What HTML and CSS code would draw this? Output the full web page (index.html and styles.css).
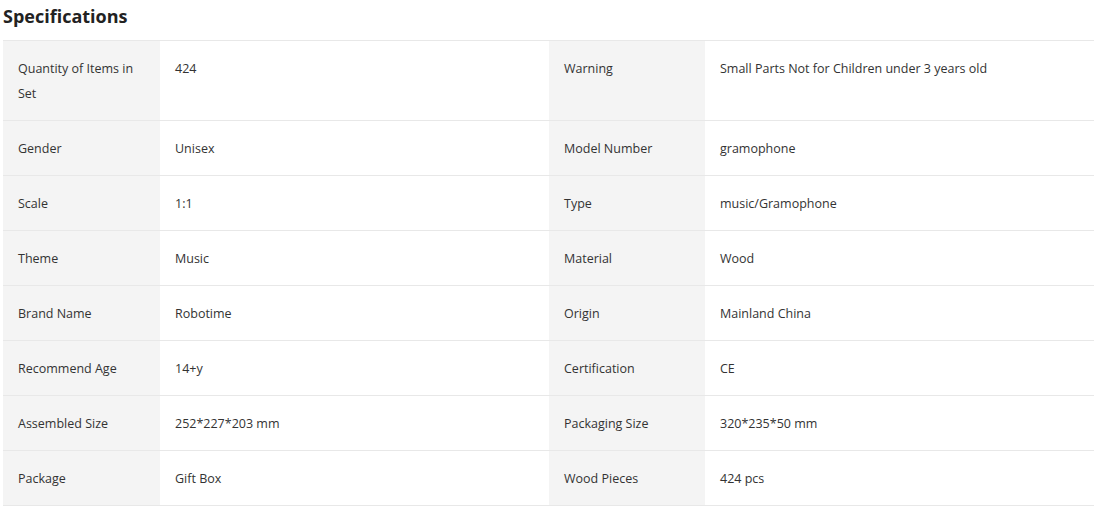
FILE: index.html
```html
<!DOCTYPE html>
<html>
<head>
<meta charset="utf-8">
<link rel="stylesheet" href="styles.css">
</head>
<body>
<div class="specs">
  <h2 class="title">Specifications</h2>
  <table class="spec-table">
    <colgroup><col class="c-label"><col class="c-value"><col class="c-label2"><col class="c-value"></colgroup>
    <tr><td class="label">Quantity of Items in Set</td><td class="value">424</td><td class="label label2">Warning</td><td class="value">Small Parts Not for Children under 3 years old</td></tr>
    <tr><td class="label">Gender</td><td class="value">Unisex</td><td class="label label2">Model Number</td><td class="value">gramophone</td></tr>
    <tr><td class="label">Scale</td><td class="value">1:1</td><td class="label label2">Type</td><td class="value">music/Gramophone</td></tr>
    <tr><td class="label">Theme</td><td class="value">Music</td><td class="label label2">Material</td><td class="value">Wood</td></tr>
    <tr><td class="label">Brand Name</td><td class="value">Robotime</td><td class="label label2">Origin</td><td class="value">Mainland China</td></tr>
    <tr><td class="label">Recommend Age</td><td class="value">14+y</td><td class="label label2">Certification</td><td class="value">CE</td></tr>
    <tr><td class="label">Assembled Size</td><td class="value">252*227*203 mm</td><td class="label label2">Packaging Size</td><td class="value">320*235*50 mm</td></tr>
    <tr><td class="label">Package</td><td class="value">Gift Box</td><td class="label label2">Wood Pieces</td><td class="value">424 pcs</td></tr>
  </table>
</div>
</body>
</html>
```
FILE: styles.css
```css
* { box-sizing: border-box; }
html, body { margin: 0; padding: 0; background: #fff; }
body { font-family: "Open Sans", "DejaVu Sans", sans-serif; color: #333; }
.specs { padding: 0 10px 0 3px; }
.title {
  margin: 0;
  font-size: 18px;
  font-weight: 700;
  color: #222;
  line-height: 24px;
  padding-top: 4px;
  height: 40px;
}
.spec-table {
  width: 1091px;
  border-collapse: collapse;
  table-layout: fixed;
  font-size: 12.5px;
}
.c-label { width: 157px; }
.c-label2 { width: 156px; }
.c-value { width: 389px; }
.spec-table tr { border-top: 1px solid #e8e8e8; border-bottom: 1px solid #e8e8e8; }
.spec-table td {
  padding: 15px 15px 14px 15px;
  line-height: 25px;
  vertical-align: top;
}
.label { background: #f4f4f4; }
.label2 { padding-left: 14px; }
.value { background: #fff; padding-left: 14px; }
```
